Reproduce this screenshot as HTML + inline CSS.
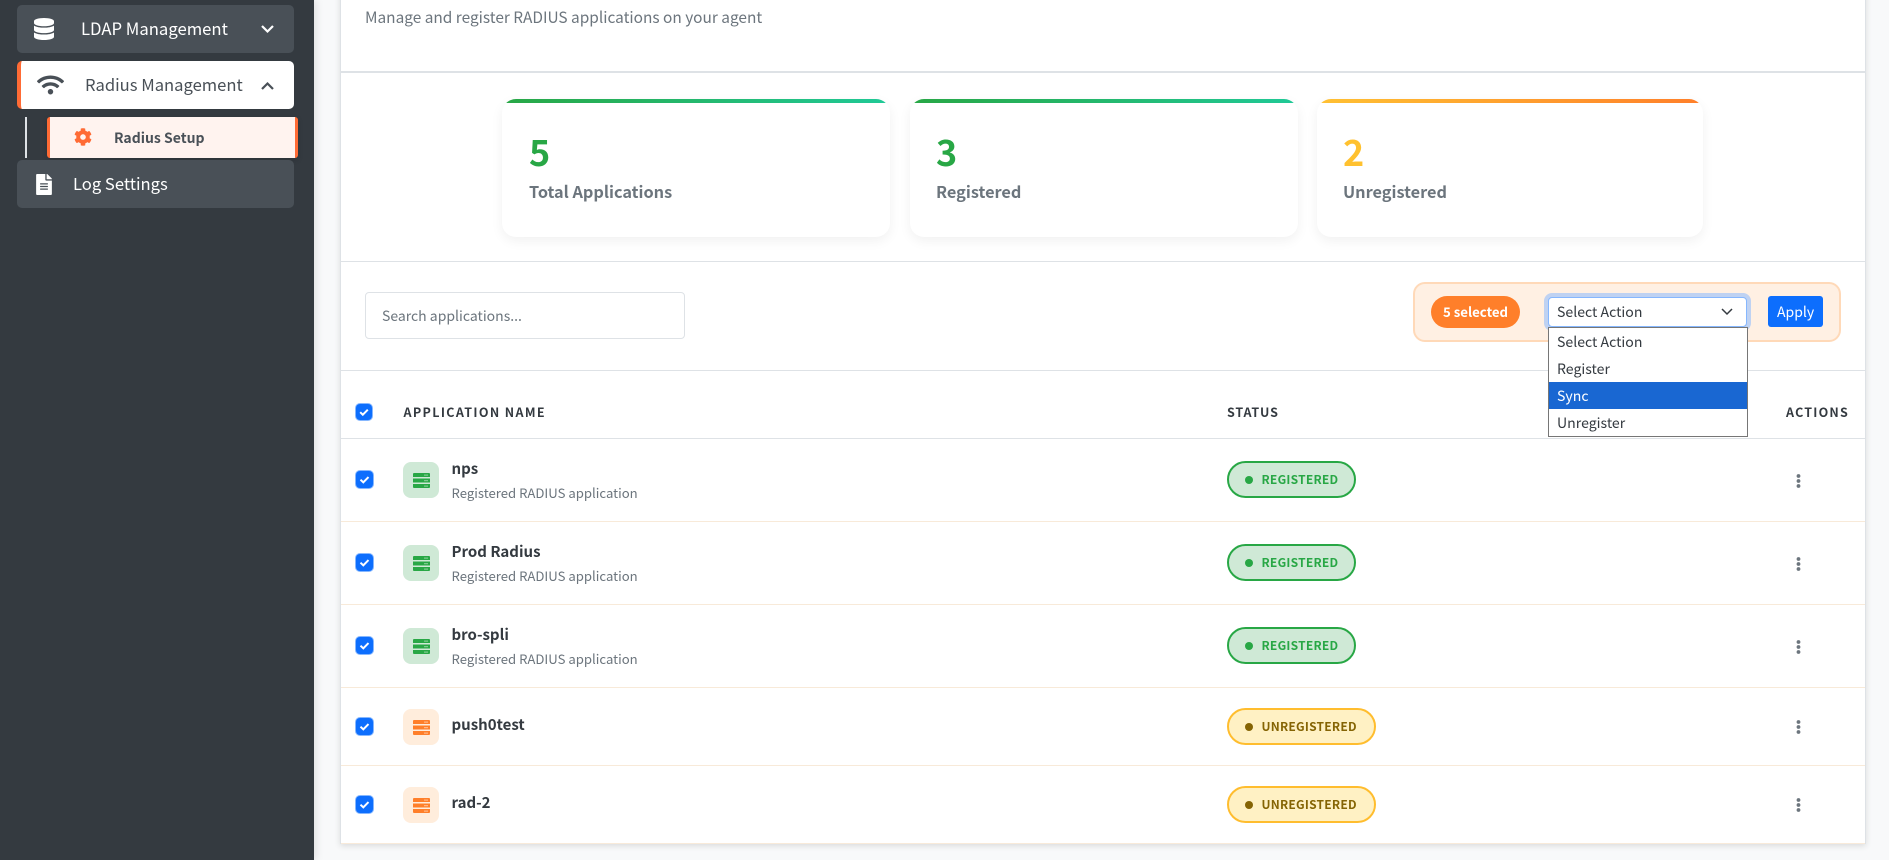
<!DOCTYPE html>
<html><head><meta charset="utf-8"><title>Radius Management</title>
<style>
*{box-sizing:border-box;margin:0;padding:0}
html,body{width:1889px;height:860px;overflow:hidden;background:#f8f9fa;font-family:"Noto Sans CJK JP","Noto Sans CJK SC","Liberation Sans",sans-serif;color:#343a40}
.a{position:absolute}
.t{position:absolute;white-space:nowrap;line-height:24px;height:24px}
#side{left:0;top:0;width:314px;height:860px;background:#343a40;box-shadow:2px 0 8px rgba(0,0,0,.1)}
.item{border-radius:5px;height:48px;left:17px;width:277px;background:#495057}
#card{left:340px;top:-10px;width:1526px;height:854px;background:#fff;border:1px solid #dee2e6;border-top:0;box-shadow:0 2px 6px rgba(0,0,0,.12)}
.line{left:341px;width:1524px;height:1px;background:#dee2e6}
.stat{top:99px;width:388px;height:138px;background:#fff;border-radius:14px;box-shadow:0 4px 12px rgba(0,0,0,.06);overflow:hidden}
.stat i{display:block;height:4px}
.num{font-size:36px;font-weight:700;line-height:40px;height:40px}
.lab{font-size:16.3px;font-weight:700;color:#6c757d}
.cb{width:17px;height:17px;left:355.5px;background:#0d6efd;border-radius:4px;box-shadow:0 0 0 1px #86b7fe}
.cb svg{display:block}
.th{font-size:12.5px;font-weight:700;letter-spacing:1.35px;color:#343a40}
.box{left:403px;width:36px;height:36px;border-radius:8px}
.box svg{left:10px;top:10.5px}
.g{background:#cfe9d6}.o{background:#ffeddc}
.name{left:451.5px;font-size:15px;font-weight:700;color:#343a40}
.sub{left:451.5px;font-size:13.15px;color:#6c757d}
.pill{left:1227px;height:37px;border-radius:19px;border:2px solid}
.pg{width:129px;background:#cfe9d6;border-color:#28a745}
.pu{width:149px;background:#fff1c4;border-color:#ffbd2e}
.dot{left:1245px;width:8px;height:8px;border-radius:50%}
.pt{left:1261.5px;font-size:12px;font-weight:700;letter-spacing:.25px}
.bd{left:341px;width:1524px;height:1px;background:#f8ead9}
.op{left:1557px;font-size:14.1px;color:#343a40}
</style></head><body>
<div id="side" class="a"></div>
<div class="a item" style="top:5px"></div>
<svg class="a" style="left:34px;top:18px" width="20" height="22" viewBox="0 0 448 512" preserveAspectRatio="none"><path fill="#fff" d="M448 73.143v45.714C448 159.143 347.667 192 224 192S0 159.143 0 118.857V73.143C0 32.857 100.333 0 224 0s224 32.857 224 73.143zM448 176v102.857C448 319.143 347.667 352 224 352S0 319.143 0 278.857V176c48.125 33.143 136.208 48.572 224 48.572S399.874 209.143 448 176zm0 160v102.857C448 479.143 347.667 512 224 512S0 479.143 0 438.857V336c48.125 33.143 136.208 48.572 224 48.572S399.874 369.143 448 336z"/></svg>
<div class="t" style="left:81px;top:16px;font-size:16.7px;color:#fff">LDAP Management</div>
<svg class="a" style="left:260px;top:24px" width="15" height="10" viewBox="0 0 15 10"><path d="M2 2l5.5 5.5L13 2" fill="none" stroke="#fff" stroke-width="2.2"/></svg>

<div class="a item" style="top:61px;background:#fff;border-left:4px solid #ff6b35"></div>
<svg class="a" style="left:37px;top:74px" width="27" height="22" viewBox="0 0 640 512"><path fill="#495057" d="M634.91 154.88C457.74-8.99 182.19-8.93 5.09 154.88c-6.66 6.16-6.79 16.59-.35 22.98l34.24 33.97c6.14 6.1 16.02 6.23 22.4.38 145.92-133.68 371.3-133.71 517.25 0 6.38 5.85 16.26 5.71 22.4-.38l34.24-33.97c6.43-6.39 6.3-16.82-.36-22.98zM320 352c-35.35 0-64 28.65-64 64s28.65 64 64 64 64-28.65 64-64-28.65-64-64-64zm202.67-83.59c-115.26-101.93-290.21-101.82-405.34 0-6.9 6.1-7.12 16.69-.57 23.15l34.44 33.99c6 5.92 15.66 6.32 22.05.8 83.95-72.57 209.74-72.41 293.49 0 6.39 5.52 16.05 5.13 22.05-.8l34.44-33.99c6.56-6.46 6.33-17.06-.56-23.15z"/></svg>
<div class="t" style="left:85px;top:72px;font-size:16.6px;color:#495057">Radius Management</div>
<svg class="a" style="left:260px;top:81px" width="15" height="10" viewBox="0 0 15 10"><path d="M2 8l5.5-5.5L13 8" fill="none" stroke="#495057" stroke-width="2.2"/></svg>

<div class="a" style="left:25px;top:117px;width:2px;height:41px;background:#dee2e6"></div>
<div class="a" style="left:47px;top:117px;width:251px;height:41px;background:#fff3ef;border-left:3px solid #ff6b35;border-right:3px solid #ff6b35;border-radius:3px;box-shadow:0 2px 6px rgba(0,0,0,.15)"></div>
<svg class="a" style="left:74px;top:128px" width="18" height="18" viewBox="0 0 512 512"><path fill="#ff6b35" d="M487.4 315.7l-42.6-24.6c4.3-23.2 4.3-47 0-70.2l42.6-24.6c4.9-2.8 7.1-8.6 5.5-14-11.1-35.6-30-67.8-54.7-94.6-3.8-4.1-10-5.1-14.8-2.3L380.8 110c-17.9-15.4-38.5-27.3-60.8-35.1V25.8c0-5.6-3.9-10.5-9.4-11.7-36.7-8.2-74.3-7.8-109.2 0-5.5 1.2-9.4 6.1-9.4 11.7V75c-22.2 7.9-42.8 19.8-60.8 35.1L88.7 85.5c-4.9-2.8-11-1.9-14.8 2.3-24.7 26.7-43.6 58.9-54.7 94.6-1.7 5.4.6 11.2 5.5 14L67.3 221c-4.3 23.2-4.3 47 0 70.2l-42.6 24.6c-4.9 2.8-7.1 8.6-5.5 14 11.1 35.6 30 67.8 54.7 94.6 3.8 4.1 10 5.1 14.8 2.3l42.6-24.6c17.9 15.4 38.5 27.3 60.8 35.1v49.2c0 5.6 3.9 10.5 9.4 11.7 36.7 8.2 74.3 7.8 109.2 0 5.5-1.2 9.4-6.1 9.4-11.7v-49.2c22.2-7.9 42.8-19.8 60.8-35.1l42.6 24.6c4.9 2.8 11 1.9 14.8-2.3 24.7-26.7 43.6-58.9 54.7-94.6 1.5-5.5-.7-11.3-5.6-14.1zM256 336c-44.1 0-80-35.9-80-80s35.9-80 80-80 80 35.9 80 80-35.9 80-80 80z"/></svg>
<div class="t" style="left:114px;top:126px;font-size:14px;font-weight:700;color:#495057">Radius Setup</div>

<div class="a item" style="top:160px"></div>
<svg class="a" style="left:36px;top:174px" width="16" height="21" viewBox="0 0 384 512"><path fill="#fff" d="M224 136V0H24C10.7 0 0 10.7 0 24v464c0 13.3 10.7 24 24 24h336c13.3 0 24-10.7 24-24V160H248c-13.2 0-24-10.8-24-24zm64 236c0 6.6-5.4 12-12 12H108c-6.6 0-12-5.4-12-12v-8c0-6.6 5.4-12 12-12h168c6.6 0 12 5.4 12 12v8zm0-64c0 6.6-5.4 12-12 12H108c-6.6 0-12-5.4-12-12v-8c0-6.6 5.4-12 12-12h168c6.6 0 12 5.4 12 12v8zm0-72v8c0 6.6-5.4 12-12 12H108c-6.6 0-12-5.4-12-12v-8c0-6.6 5.4-12 12-12h168c6.6 0 12 5.4 12 12zm96-114.1v6.1H256V0h6.1c6.4 0 12.5 2.5 17 7l97.9 98c4.5 4.5 7 10.6 7 16.9z"/></svg>
<div class="t" style="left:73px;top:171px;font-size:16.6px;color:#fff">Log Settings</div>

<div id="card" class="a"></div>
<div class="t" style="left:365px;top:5px;font-size:15.42px;color:#6c757d">Manage and register RADIUS applications on your agent</div>
<div class="a line" style="top:71px;height:2px"></div>

<div class="a stat" style="left:502px"><i style="background:linear-gradient(90deg,#28a745,#20c997)"></i></div>
<div class="a stat" style="left:910px"><i style="background:linear-gradient(90deg,#28a745,#20c997)"></i></div>
<div class="a stat" style="left:1317px;width:386px"><i style="background:linear-gradient(90deg,#ffc133,#ff7f2a)"></i></div>
<div class="a num" style="left:529px;top:131px;color:#28a745">5</div>
<div class="a num" style="left:936px;top:131px;color:#28a745">3</div>
<div class="a num" style="left:1343px;top:131px;color:#ffc12f">2</div>
<div class="t lab" style="left:529px;top:179px">Total Applications</div>
<div class="t lab" style="left:936px;top:179px">Registered</div>
<div class="t lab" style="left:1343px;top:179px">Unregistered</div>
<div class="a line" style="top:261px"></div>
<div class="a line" style="top:370px"></div>

<div class="a" style="left:365px;top:292px;width:320px;height:47px;border:1px solid #dee2e6;border-radius:4px;background:#fff"></div>
<div class="t" style="left:382px;top:304px;font-size:14px;color:#6c757d">Search applications...</div>

<div class="a" style="left:1413px;top:282px;width:428px;height:60px;background:#fff0e3;border:2px solid #ffd9b8;border-radius:12px"></div>
<div class="a" style="left:1431px;top:296px;width:89px;height:32px;background:#ff7f2a;border-radius:16px"></div>
<div class="t" style="left:1443px;top:300px;font-size:13.2px;font-weight:700;color:#fff">5 selected</div>
<div class="a" style="left:1548px;top:297px;width:199px;height:30px;background:#fff;border:1px solid #86b7fe;border-radius:4px;box-shadow:0 0 0 4px #bfd2f2"></div>
<div class="t op" style="top:300px">Select Action</div>
<svg class="a" style="left:1721px;top:307px" width="12" height="9" viewBox="0 0 12 9"><path d="M1 2l5 5 5-5" fill="none" stroke="#343a40" stroke-width="1.5"/></svg>
<div class="a" style="left:1548px;top:327px;width:200px;height:110px;background:#fff;border:1px solid #767676"></div>
<div class="a" style="left:1549px;top:382px;width:198px;height:27px;background:#1967d2"></div>
<div class="t op" style="top:330px">Select Action</div>
<div class="t op" style="top:357px">Register</div>
<div class="t op" style="top:384px;color:#fff">Sync</div>
<div class="t op" style="top:411px">Unregister</div>
<div class="a" style="left:1768px;top:296px;width:55px;height:31px;background:#0d6efd;border-radius:3px"></div>
<div class="t" style="left:1777px;top:300px;font-size:14px;color:#fff">Apply</div>

<div class="a cb" style="top:404px;width:16px;height:16px;left:356px"><svg width="16" height="16" viewBox="0 0 16 16"><path d="M4.2 8.2l2.6 2.5 5-5" fill="none" stroke="#fff" stroke-width="2"/></svg></div>
<div class="t th" style="left:403.5px;top:400px">APPLICATION NAME</div>
<div class="t th" style="left:1227px;top:400px;letter-spacing:.85px">STATUS</div>
<div class="t th" style="left:1786px;top:400px;letter-spacing:1.2px">ACTIONS</div>
<div class="a line" style="top:438px"></div>

<!-- row 1 -->
<div class="a cb" style="top:471.3px"><svg width="17" height="17" viewBox="0 0 17 17"><path d="M4.5 8.7l2.8 2.6 5.2-5.2" fill="none" stroke="#fff" stroke-width="2"/></svg></div>
<div class="a box g" style="top:462px"><svg class="a" width="17" height="15" viewBox="0 0 17 15"><path fill="#28a745" d="M1 0h15a1 1 0 0 1 1 1v3H0V1a1 1 0 0 1 1-1zM0 5.5h17v4H0zM0 11h17v3a1 1 0 0 1-1 1H1a1 1 0 0 1-1-1z"/><path fill="#cfe9d6" opacity=".5" d="M11 1.5h4v1.2h-4zM11 7h4v1.2h-4zM11 12.5h4v1.2h-4z"/></svg></div>
<div class="t name" style="top:457px">nps</div>
<div class="t sub" style="top:481px">Registered RADIUS application</div>
<div class="a pill pg" style="top:461px"></div><div class="a dot" style="top:476px;background:#28a745"></div>
<div class="t pt" style="top:468px;color:#28a745">REGISTERED</div>
<svg class="a" style="left:1796px;top:474px" width="5" height="14" viewBox="0 0 5 14"><circle cx="2.5" cy="2" r="1.9" fill="#6c757d"/><circle cx="2.5" cy="7" r="1.9" fill="#6c757d"/><circle cx="2.5" cy="12" r="1.9" fill="#6c757d"/></svg>
<div class="a bd" style="top:521px"></div>

<!-- row 2 -->
<div class="a cb" style="top:554.3px"><svg width="17" height="17" viewBox="0 0 17 17"><path d="M4.5 8.7l2.8 2.6 5.2-5.2" fill="none" stroke="#fff" stroke-width="2"/></svg></div>
<div class="a box g" style="top:545px"><svg class="a" width="17" height="15" viewBox="0 0 17 15"><path fill="#28a745" d="M1 0h15a1 1 0 0 1 1 1v3H0V1a1 1 0 0 1 1-1zM0 5.5h17v4H0zM0 11h17v3a1 1 0 0 1-1 1H1a1 1 0 0 1-1-1z"/><path fill="#cfe9d6" opacity=".5" d="M11 1.5h4v1.2h-4zM11 7h4v1.2h-4zM11 12.5h4v1.2h-4z"/></svg></div>
<div class="t name" style="top:540px">Prod Radius</div>
<div class="t sub" style="top:564px">Registered RADIUS application</div>
<div class="a pill pg" style="top:544px"></div><div class="a dot" style="top:559px;background:#28a745"></div>
<div class="t pt" style="top:551px;color:#28a745">REGISTERED</div>
<svg class="a" style="left:1796px;top:557px" width="5" height="14" viewBox="0 0 5 14"><circle cx="2.5" cy="2" r="1.9" fill="#6c757d"/><circle cx="2.5" cy="7" r="1.9" fill="#6c757d"/><circle cx="2.5" cy="12" r="1.9" fill="#6c757d"/></svg>
<div class="a bd" style="top:604px"></div>

<!-- row 3 -->
<div class="a cb" style="top:637.3px"><svg width="17" height="17" viewBox="0 0 17 17"><path d="M4.5 8.7l2.8 2.6 5.2-5.2" fill="none" stroke="#fff" stroke-width="2"/></svg></div>
<div class="a box g" style="top:628px"><svg class="a" width="17" height="15" viewBox="0 0 17 15"><path fill="#28a745" d="M1 0h15a1 1 0 0 1 1 1v3H0V1a1 1 0 0 1 1-1zM0 5.5h17v4H0zM0 11h17v3a1 1 0 0 1-1 1H1a1 1 0 0 1-1-1z"/><path fill="#cfe9d6" opacity=".5" d="M11 1.5h4v1.2h-4zM11 7h4v1.2h-4zM11 12.5h4v1.2h-4z"/></svg></div>
<div class="t name" style="top:623px">bro-spli</div>
<div class="t sub" style="top:647px">Registered RADIUS application</div>
<div class="a pill pg" style="top:627px"></div><div class="a dot" style="top:642px;background:#28a745"></div>
<div class="t pt" style="top:634px;color:#28a745">REGISTERED</div>
<svg class="a" style="left:1796px;top:640px" width="5" height="14" viewBox="0 0 5 14"><circle cx="2.5" cy="2" r="1.9" fill="#6c757d"/><circle cx="2.5" cy="7" r="1.9" fill="#6c757d"/><circle cx="2.5" cy="12" r="1.9" fill="#6c757d"/></svg>
<div class="a bd" style="top:687px"></div>

<!-- row 4 -->
<div class="a cb" style="top:718.3px"><svg width="17" height="17" viewBox="0 0 17 17"><path d="M4.5 8.7l2.8 2.6 5.2-5.2" fill="none" stroke="#fff" stroke-width="2"/></svg></div>
<div class="a box o" style="top:709px"><svg class="a" width="17" height="15" viewBox="0 0 17 15"><path fill="#ff7f2a" d="M1 0h15a1 1 0 0 1 1 1v3H0V1a1 1 0 0 1 1-1zM0 5.5h17v4H0zM0 11h17v3a1 1 0 0 1-1 1H1a1 1 0 0 1-1-1z"/><path fill="#ffeddc" opacity=".5" d="M11 1.5h4v1.2h-4zM11 7h4v1.2h-4zM11 12.5h4v1.2h-4z"/></svg></div>
<div class="t name" style="top:713px">push0test</div>
<div class="a pill pu" style="top:708px"></div><div class="a dot" style="top:723px;background:#856404"></div>
<div class="t pt" style="top:715px;color:#856404">UNREGISTERED</div>
<svg class="a" style="left:1796px;top:720px" width="5" height="14" viewBox="0 0 5 14"><circle cx="2.5" cy="2" r="1.9" fill="#6c757d"/><circle cx="2.5" cy="7" r="1.9" fill="#6c757d"/><circle cx="2.5" cy="12" r="1.9" fill="#6c757d"/></svg>
<div class="a bd" style="top:765px"></div>

<!-- row 5 -->
<div class="a cb" style="top:796.3px"><svg width="17" height="17" viewBox="0 0 17 17"><path d="M4.5 8.7l2.8 2.6 5.2-5.2" fill="none" stroke="#fff" stroke-width="2"/></svg></div>
<div class="a box o" style="top:787px"><svg class="a" width="17" height="15" viewBox="0 0 17 15"><path fill="#ff7f2a" d="M1 0h15a1 1 0 0 1 1 1v3H0V1a1 1 0 0 1 1-1zM0 5.5h17v4H0zM0 11h17v3a1 1 0 0 1-1 1H1a1 1 0 0 1-1-1z"/><path fill="#ffeddc" opacity=".5" d="M11 1.5h4v1.2h-4zM11 7h4v1.2h-4zM11 12.5h4v1.2h-4z"/></svg></div>
<div class="t name" style="top:791px">rad-2</div>
<div class="a pill pu" style="top:786px"></div><div class="a dot" style="top:801px;background:#856404"></div>
<div class="t pt" style="top:793px;color:#856404">UNREGISTERED</div>
<svg class="a" style="left:1796px;top:798px" width="5" height="14" viewBox="0 0 5 14"><circle cx="2.5" cy="2" r="1.9" fill="#6c757d"/><circle cx="2.5" cy="7" r="1.9" fill="#6c757d"/><circle cx="2.5" cy="12" r="1.9" fill="#6c757d"/></svg>
<div class="a bd" style="top:843px"></div>
</body></html>
